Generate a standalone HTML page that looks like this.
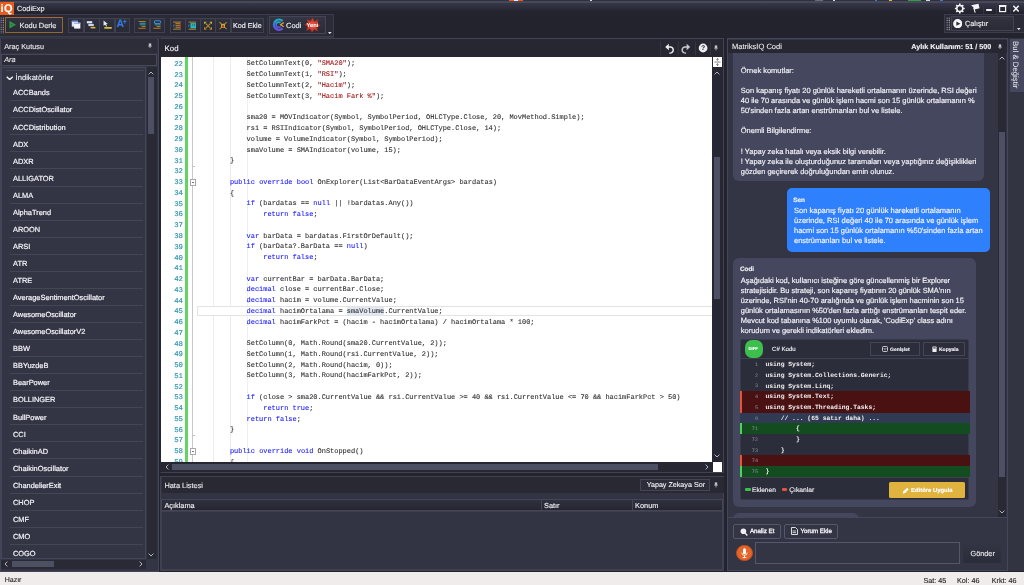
<!DOCTYPE html>
<html lang="tr"><head><meta charset="utf-8"><title>CodiExp</title><style>
*{margin:0;padding:0;box-sizing:border-box}
html,body{width:1024px;height:585px;overflow:hidden;background:#23232e}
body{text-rendering:geometricPrecision;position:relative;font-family:"Liberation Sans",sans-serif;font-size:7.3px;color:#e9e9ee;line-height:1}
.a{position:absolute}
.t{-webkit-text-stroke:0.12px;position:absolute;white-space:nowrap;line-height:10px;height:10px}
.b{font-weight:bold}
.mono{font-family:"Liberation Mono",monospace}
.code{-webkit-text-stroke:0.1px;position:absolute;left:196.5px;white-space:pre;font-family:"Liberation Mono",monospace;font-size:6.965px;line-height:10.76px;height:10.76px;color:#303030}
.code .k{color:#1a1aff}
.code .s{color:#a31515}
.ln{-webkit-text-stroke:0.15px;position:absolute;left:161px;width:22px;text-align:right;font-family:"Liberation Mono",monospace;font-size:7.35px;line-height:10.76px;height:10.76px;color:#2b91af}
.it{-webkit-text-stroke:0.2px;position:absolute;left:13px;white-space:nowrap;line-height:10px;height:10px;font-size:7.42px;color:#f4f4f8}
.sep{position:absolute;left:10px;width:133px;height:1px;background:#444656}
.chat{-webkit-text-stroke:0.18px;position:absolute;white-space:nowrap;font-size:7.47px;line-height:10.1px;height:10.1px;color:#f0f0f4}
.dl{position:absolute;left:740px;width:229.5px;height:10.7px}
.dn{position:absolute;left:746px;width:12px;text-align:right;font-family:"Liberation Mono",monospace;font-size:5.2px;line-height:10.7px;color:#8a8c9c}
.dc{position:absolute;left:765.4px;white-space:pre;font-family:"Liberation Mono",monospace;font-weight:bold;font-size:6.37px;line-height:10.7px;color:#f2f2f2}
</style></head><body>
<div id="root" style="position:absolute;left:0;top:0;width:1024px;height:585px;will-change:transform">
<div class="a" style="left:0px;top:0px;width:1024px;height:38px;background:#23232e;"></div>
<div class="a" style="left:0px;top:0px;width:1024px;height:1px;background:#30313d;"></div>
<div class="a" style="left:0px;top:1px;width:1024px;height:1.5px;background:#474859;"></div>
<div class="a" style="left:0px;top:2.5px;width:1024px;height:9.5px;background:linear-gradient(#373848,#23232e);"></div>
<div class="a" style="left:0px;top:38px;width:1024px;height:534px;background:#23232e;"></div>
<div class="a" style="left:-1px;top:14px;width:335.2px;height:23.2px;background:#2a2b37;border:1px solid #3b3c4b;"></div>
<div class="a" style="left:0px;top:37.2px;width:334px;height:1.4px;background:#343545;"></div>
<div class="a" style="left:908px;top:0px;width:13px;height:1.2px;background:#2f9e44;"></div>
<div class="a" style="left:509px;top:0px;width:5px;height:1.2px;background:#e8591c;"></div>
<div class="a" style="left:514px;top:0px;width:4px;height:1.2px;background:#e8e8ee;"></div>
<div class="a" style="left:518px;top:0px;width:5px;height:1.2px;background:#e8591c;"></div>
<div class="a" style="left:590px;top:0px;width:2px;height:1.2px;background:#d8d8e0;"></div>
<div class="a" style="left:815px;top:0px;width:8px;height:1.2px;background:#6a6b78;"></div>
<div class="a" style="left:833px;top:0px;width:2px;height:1.2px;background:#d8d8e0;"></div>
<div class="a" style="left:875px;top:0px;width:2px;height:1.2px;background:#3a7bd5;"></div>
<div class="a" style="left:889px;top:0px;width:3px;height:1.2px;background:#e0b23e;"></div>
<div class="a" style="left:926px;top:0px;width:4px;height:1.2px;background:#d8d8e0;"></div>
<div class="a" style="left:940px;top:0px;width:3px;height:1.2px;background:#3a7bd5;"></div>
<div class="a" style="left:0;top:2px;width:14px;height:12.5px;background:#e8591c;overflow:hidden"><div class="t b" style="left:0.6px;top:1.6px;font-size:11px;color:#fff;letter-spacing:0.4px">iQ</div></div>
<div class="t " style="left:17px;top:4.10px;font-size:7.3px;color:#f0f0f4">CodiExp</div>
<svg class="a" style="left:950px;top:2px" width="74" height="13" viewBox="950 2 74 13">
<g fill="none" stroke="#f4f4f8" stroke-width="1.5">
<circle cx="959.8" cy="8.5" r="3"/>
<g stroke-width="1.6"><path d="M959.8 3.6v1.6M959.8 11.8v1.6M954.9 8.5h1.6M963.1 8.5h1.6M956.3 5l1.2 1.2M962.1 10.8l1.2 1.2M963.3 5l-1.2 1.2M957.5 10.8l-1.2 1.2"/></g>
</g>
<path d="M971 5.2 l7.5 -1.4 l1 4.4 l-5 1.3 l-1.2 -2.2 z" fill="#f4f4f8"/><path d="M973.6 7.6 l1.6 5" stroke="#f4f4f8" stroke-width="1.1"/>
<rect x="986.2" y="9" width="5.6" height="2" fill="#f4f4f8"/>
<rect x="999.6" y="5.6" width="6" height="6" fill="none" stroke="#f4f4f8" stroke-width="1.2"/><rect x="999" y="5" width="7.2" height="2" fill="#f4f4f8"/>
<path d="M1013.3 5.8 l5.4 5.6 M1018.7 5.8 l-5.4 5.6" stroke="#f4f4f8" stroke-width="1.5"/>
</svg>
<div class="a" style="left:983.3px;top:2.5px;width:0.8px;height:11px;background:#343544;"></div>
<div class="a" style="left:996.3px;top:2.5px;width:0.8px;height:11px;background:#343544;"></div>
<div class="a" style="left:1010px;top:2.5px;width:0.8px;height:11px;background:#343544;"></div>
<div class="a" style="left:0;top:17px;width:4px;height:17px;background-image:radial-gradient(circle,#a4a5b2 0.55px,rgba(0,0,0,0) 0.85px);background-size:2.3px 2.3px;"></div>
<div class="a" style="left:4.9px;top:17.3px;width:58.4px;height:15.6px;background:linear-gradient(#32333f,#2a2b36);border:1px solid #8f6c2e;border-top-color:#a8663a;"></div>
<svg class="a" style="left:8.8px;top:20.3px" width="7.6" height="9.5" viewBox="0 0 9 10"><path d="M0.5 0.5 L8.5 5 L0.5 9.5 z" fill="#2c9a46"/><path d="M2.4 3.6 L5 5 L2.4 6.4z" fill="#1f7a36"/></svg>
<div class="t " style="left:19.5px;top:21.20px;font-size:7.4px;color:#f2f2f6">Kodu Derle</div>
<div class="a" style="left:68.3px;top:17.6px;width:15.9px;height:15.3px;background:linear-gradient(#30313f,#292a36);border:1px solid #3f4050;"></div>
<div class="a" style="left:83.7px;top:17.6px;width:15.9px;height:15.3px;background:linear-gradient(#30313f,#292a36);border:1px solid #3f4050;"></div>
<div class="a" style="left:99.1px;top:17.6px;width:15.9px;height:15.3px;background:linear-gradient(#30313f,#292a36);border:1px solid #3f4050;"></div>
<div class="a" style="left:114.5px;top:17.6px;width:15.9px;height:15.3px;background:linear-gradient(#30313f,#292a36);border:1px solid #3f4050;"></div>
<div class="a" style="left:134.2px;top:17.6px;width:15.8px;height:15.3px;background:linear-gradient(#30313f,#292a36);border:1px solid #3f4050;"></div>
<div class="a" style="left:149.5px;top:17.6px;width:15.8px;height:15.3px;background:linear-gradient(#30313f,#292a36);border:1px solid #3f4050;"></div>
<div class="a" style="left:170.0px;top:17.6px;width:15.65px;height:15.3px;background:linear-gradient(#30313f,#292a36);border:1px solid #3f4050;"></div>
<div class="a" style="left:185.15px;top:17.6px;width:15.65px;height:15.3px;background:linear-gradient(#30313f,#292a36);border:1px solid #3f4050;"></div>
<div class="a" style="left:200.3px;top:17.6px;width:15.65px;height:15.3px;background:linear-gradient(#30313f,#292a36);border:1px solid #3f4050;"></div>
<div class="a" style="left:215.45px;top:17.6px;width:15.65px;height:15.3px;background:linear-gradient(#30313f,#292a36);border:1px solid #3f4050;"></div>
<div class="a" style="left:230.6px;top:17.6px;width:33.6px;height:15.3px;background:linear-gradient(#30313f,#292a36);border:1px solid #3f4050;"></div>
<div class="t " style="left:233.1px;top:21.20px;font-size:7.15px;color:#f6f6fa">Kod Ekle</div>
<svg class="a" style="left:71.23px;top:20.02px" width="10.14" height="9.36" viewBox="0 0 13 12"><rect x="1" y="1" width="8" height="7.5" fill="#dfe6f5"/><rect x="1" y="1" width="8" height="1.6" fill="#6d8fe0"/><rect x="4" y="3.5" width="8" height="7.5" fill="#f4f6fb"/><rect x="4" y="3.5" width="8" height="1.6" fill="#9cb1ea"/></svg>
<svg class="a" style="left:86.13px;top:20.02px" width="10.14" height="9.36" viewBox="0 0 13 12"><rect x="1" y="1.5" width="7" height="2.8" fill="#dfe6f5"/><rect x="3" y="5" width="7" height="2.8" fill="#c9d3ea"/><rect x="6" y="8.8" width="6" height="2" fill="#e2b93a"/></svg>
<svg class="a" style="left:101.63px;top:20.02px" width="10.14" height="9.36" viewBox="0 0 13 12"><path d="M2 0.5 L2 7.5 L4 6 L5.6 8.6 L6.6 8 L5.2 5.6 L7.4 5.2z" fill="#e6e9f2"/><rect x="3" y="9" width="9.5" height="2.2" fill="#d8c23a"/><rect x="5" y="8" width="1.4" height="1.2" fill="#3cb34a"/></svg>
<div class="t b" style="left:116.6px;top:19.4px;font-size:10.4px;line-height:12px;height:12px;color:#2f7de6;letter-spacing:-0.5px">A<span style="font-size:7px;position:relative;top:-3.4px;left:-0.8px">+</span></div>
<svg class="a" style="left:136.73px;top:20.12px" width="10.14" height="9.36" viewBox="0 0 13 12"><rect x="2" y="1.4" width="9" height="1.1" fill="#c58a2c"/><rect x="3.5" y="3.6" width="7.5" height="1.2" fill="#3aa0a8"/><rect x="3.5" y="5.6" width="7.5" height="1.2" fill="#3aa0a8"/><rect x="6" y="7.8" width="5" height="1.1" fill="#c58a2c"/><rect x="2" y="10" width="9" height="1.1" fill="#c58a2c"/><rect x="1.4" y="9.9" width="1" height="1.2" fill="#c8322a"/></svg>
<svg class="a" style="left:152.03px;top:20.12px" width="10.14" height="9.36" viewBox="0 0 13 12"><rect x="3" y="1" width="8" height="3.4" rx="1.6" fill="none" stroke="#3a8fd0" stroke-width="1.3"/><rect x="3.5" y="5.6" width="7.5" height="1.2" fill="#3aa0a8"/><rect x="6" y="7.8" width="5" height="1.1" fill="#c58a2c"/><rect x="2" y="10" width="9" height="1.1" fill="#c58a2c"/><rect x="1.4" y="9.9" width="1" height="1.2" fill="#c8322a"/></svg>
<svg class="a" style="left:172.03px;top:20.52px" width="10.14" height="9.36" viewBox="0 0 13 12"><path d="M3 4.4 a2 2 0 0 0 0 3.4" fill="none" stroke="#2f8fd0" stroke-width="1.1"/><rect x="1.5" y="0.8" width="10" height="1.2" fill="#c58a2c"/><rect x="4.5" y="3" width="6" height="1.1" fill="#d9a23a"/><rect x="4.5" y="5.2" width="6" height="1.1" fill="#c58a2c"/><rect x="4.5" y="7.4" width="6" height="1.1" fill="#d9a23a"/><rect x="1.5" y="9.8" width="10" height="1.2" fill="#c58a2c"/><rect x="10.5" y="3" width="1" height="5.5" fill="#c8322a"/></svg>
<svg class="a" style="left:187.33px;top:20.52px" width="10.14" height="9.36" viewBox="0 0 13 12"><path d="M3 4.4 a2 2 0 0 0 0 3.4" fill="none" stroke="#2f8fd0" stroke-width="1.1"/><rect x="4.4" y="2.6" width="7.2" height="6.8" fill="#2fb5b8"/><rect x="2" y="0.8" width="9.6" height="1.2" fill="#c58a2c"/><rect x="2" y="9.9" width="9.6" height="1.2" fill="#c58a2c"/><rect x="7" y="3.6" width="1" height="3" fill="#1c6a90"/><rect x="9" y="3.6" width="1" height="3" fill="#1c6a90"/></svg>
<svg class="a" style="left:202.63px;top:20.52px" width="10.14" height="9.36" viewBox="0 0 13 12"><path d="M3.4 3 L9.6 9.4 M9.6 3 L3.4 9.4" stroke="#a8842c" stroke-width="1.5"/><path d="M1.5 1 h3.2 l-3.2 3.2z M11.5 1 h-3.2 l3.2 3.2z M1.5 11 h3.2 l-3.2 -3.2z M11.5 11 h-3.2 l3.2 -3.2z" fill="#e3c02e"/><circle cx="3" cy="9.4" r="0.9" fill="#c8322a"/><circle cx="10" cy="9.4" r="0.9" fill="#c8322a"/></svg>
<svg class="a" style="left:218.03px;top:20.52px" width="10.14" height="9.36" viewBox="0 0 13 12"><path d="M1.8 1.4 L11.2 10.6 M11.2 1.4 L1.8 10.6" stroke="#b8862c" stroke-width="1.3"/><path d="M4 3.6 h5 v5 h-5z" fill="#d9b52e"/><circle cx="6.5" cy="6.6" r="1.5" fill="#c8322a"/><circle cx="5.2" cy="4.8" r="0.8" fill="#7ab83a"/><circle cx="7.8" cy="4.8" r="0.8" fill="#7ab83a"/></svg>
<div class="a" style="left:266.8px;top:15px;width:0.8px;height:21.4px;background:#343545;"></div>
<div class="a" style="left:269px;top:15.7px;width:57px;height:18.7px;background:linear-gradient(#343545,#2a2b37);border:1px solid #444555;"></div>
<svg class="a" style="left:272px;top:18px" width="13" height="13.4" viewBox="0 0 13 13.4"><defs><linearGradient id="cg" x1="0" y1="0" x2="0" y2="1"><stop offset="0" stop-color="#1fb0c0"/><stop offset="0.5" stop-color="#3a72e4"/><stop offset="1" stop-color="#6a4ee2"/></linearGradient></defs><path d="M10.6 3 A5.1 5.1 0 1 0 10.6 10.4" fill="none" stroke="url(#cg)" stroke-width="2.4"/><path d="M8.6 4.9 A2.6 2.6 0 1 0 8.6 8.5" fill="none" stroke="url(#cg)" stroke-width="1.7"/><path d="M11.8 4.6 L8.6 6.7 L11.8 8.8" fill="none" stroke="#e9a23a" stroke-width="1.2"/></svg>
<div class="t " style="left:286px;top:21.00px;font-size:7.5px;color:#f2f2f6">Codi</div>
<svg class="a" style="left:303.6px;top:17.2px" width="17" height="16" viewBox="-8.5 -8 17 16"><path d="M0 -7.4 L1.9 -3.6 L5.8 -5.4 L4.5 -1.5 L7.9 0.5 L4.4 2.3 L5.3 6.3 L1.7 4.4 L-0.5 7.4 L-2.3 4 L-6.1 5.5 L-4.8 1.7 L-7.9 -0.4 L-4.6 -2.1 L-5.5 -5.9 L-1.9 -4 Z" fill="#cf3b2c" stroke="#8a2a20" stroke-width="0.5"/><circle cx="0" cy="0" r="3.6" fill="#e25a48" opacity="0.7"/><text x="0" y="2.1" font-family="Liberation Sans" font-weight="bold" font-size="5.8" fill="#fff" text-anchor="middle">Yeni</text></svg>
<svg class="a" style="left:328.1px;top:31.9px" width="3.6" height="2.2" viewBox="0 0 5 3"><path d="M0 0h5L2.5 3z" fill="#e6e6ec"/></svg>
<div class="a" style="left:943.5px;top:14px;width:81.5px;height:19px;background:#2a2b37;border:1px solid #3b3c4b;border-right:none;"></div>
<div class="a" style="left:945.5px;top:17px;width:4px;height:14px;background-image:radial-gradient(circle,#a4a5b2 0.55px,rgba(0,0,0,0) 0.85px);background-size:2.3px 2.3px;"></div>
<div class="a" style="left:951px;top:16px;width:62.5px;height:14.6px;background:linear-gradient(#32333f,#292a36);border:1px solid #414252;"></div>
<svg class="a" style="left:952.8px;top:18.6px" width="9.4" height="9.4" viewBox="0 0 10 10"><circle cx="5" cy="5" r="4.9" fill="#f6f6fa"/><path d="M3.6 2.7 L7.9 5 L3.6 7.3z" fill="#2a2b37"/></svg>
<div class="t " style="left:965px;top:19.20px;font-size:7.3px;color:#f2f2f6">Çalıştır</div>
<svg class="a" style="left:1017.2px;top:28.2px" width="3.6" height="2.2" viewBox="0 0 5 3"><path d="M0 0h5L2.5 3z" fill="#e6e6ec"/></svg>
<div class="a" style="left:0px;top:38.5px;width:158.6px;height:533px;background:#333544;border:1px solid #42445a;"></div>
<div class="a" style="left:1px;top:39px;width:156px;height:13.5px;background:#2c2d39;"></div>
<div class="t " style="left:4.2px;top:41.50px;font-size:7.3px;color:#e6e6ec">Araç Kutusu</div>
<svg class="a" style="left:148.4px;top:42.6px" width="4" height="5.6" viewBox="0 0 5 7"><rect x="1" y="0.5" width="3" height="3.2" fill="#c4c4ce"/><rect x="0.3" y="3.5" width="4.4" height="1" fill="#c4c4ce"/><rect x="2" y="4.4" width="1" height="2.4" fill="#c4c4ce"/></svg>
<div class="a" style="left:1px;top:53.5px;width:156px;height:12px;background:#2a2b37;border:1px solid #474858;"></div>
<div class="t " style="left:4.2px;top:54.60px;font-style:italic;font-size:7.3px;color:#e6e6ec">Ara</div>
<div class="a" style="left:1px;top:66.8px;width:144.5px;height:492.2px;background:#333544;border:1px solid #44465a;"></div>
<div class="a" style="left:5.5px;top:69.5px;width:138px;height:1px;background:#444656;"></div>
<svg class="a" style="left:5.5px;top:75.5px" width="7.5" height="4.6" viewBox="0 0 7.5 4.6"><path d="M0.7 0.8 L3.75 3.6 L6.8 0.8" fill="none" stroke="#f0f0f4" stroke-width="1.4"/></svg>
<div class="t " style="left:15.6px;top:72.50px;font-size:7.6px;color:#f2f2f6">İndikatörler</div>
<div class="it" style="top:88.40px">ACCBands</div>
<div class="sep" style="top:100.20px"></div>
<div class="it" style="top:105.46px">ACCDistOscillator</div>
<div class="sep" style="top:117.26px"></div>
<div class="it" style="top:122.52px">ACCDistribution</div>
<div class="sep" style="top:134.32px"></div>
<div class="it" style="top:139.58px">ADX</div>
<div class="sep" style="top:151.38px"></div>
<div class="it" style="top:156.64px">ADXR</div>
<div class="sep" style="top:168.44px"></div>
<div class="it" style="top:173.70px">ALLIGATOR</div>
<div class="sep" style="top:185.50px"></div>
<div class="it" style="top:190.76px">ALMA</div>
<div class="sep" style="top:202.56px"></div>
<div class="it" style="top:207.82px">AlphaTrend</div>
<div class="sep" style="top:219.62px"></div>
<div class="it" style="top:224.88px">AROON</div>
<div class="sep" style="top:236.68px"></div>
<div class="it" style="top:241.94px">ARSI</div>
<div class="sep" style="top:253.74px"></div>
<div class="it" style="top:259.00px">ATR</div>
<div class="sep" style="top:270.80px"></div>
<div class="it" style="top:276.06px">ATRE</div>
<div class="sep" style="top:287.86px"></div>
<div class="it" style="top:293.12px">AverageSentimentOscillator</div>
<div class="sep" style="top:304.92px"></div>
<div class="it" style="top:310.18px">AwesomeOscillator</div>
<div class="sep" style="top:321.98px"></div>
<div class="it" style="top:327.24px">AwesomeOscillatorV2</div>
<div class="sep" style="top:339.04px"></div>
<div class="it" style="top:344.30px">BBW</div>
<div class="sep" style="top:356.10px"></div>
<div class="it" style="top:361.36px">BBYuzdeB</div>
<div class="sep" style="top:373.16px"></div>
<div class="it" style="top:378.42px">BearPower</div>
<div class="sep" style="top:390.22px"></div>
<div class="it" style="top:395.48px">BOLLINGER</div>
<div class="sep" style="top:407.28px"></div>
<div class="it" style="top:412.54px">BullPower</div>
<div class="sep" style="top:424.34px"></div>
<div class="it" style="top:429.60px">CCI</div>
<div class="sep" style="top:441.40px"></div>
<div class="it" style="top:446.66px">ChaikinAD</div>
<div class="sep" style="top:458.46px"></div>
<div class="it" style="top:463.72px">ChaikinOscillator</div>
<div class="sep" style="top:475.52px"></div>
<div class="it" style="top:480.78px">ChandelierExit</div>
<div class="sep" style="top:492.58px"></div>
<div class="it" style="top:497.84px">CHOP</div>
<div class="sep" style="top:509.64px"></div>
<div class="it" style="top:514.90px">CMF</div>
<div class="sep" style="top:526.70px"></div>
<div class="it" style="top:531.96px">CMO</div>
<div class="sep" style="top:543.76px"></div>
<div class="it" style="top:549.02px">COGO</div>
<div class="a" style="left:146.5px;top:66.8px;width:10px;height:492.2px;background:#292a36;"></div>
<svg class="a" style="left:148.2px;top:71px" width="6" height="4" viewBox="0 0 6 4"><path d="M0.6 3.4 L3 1 L5.4 3.4" fill="none" stroke="#c4c4ce" stroke-width="0.9"/></svg>
<div class="a" style="left:148.2px;top:77.3px;width:5.7px;height:57.2px;background:#4d4f63;"></div>
<svg class="a" style="left:148.2px;top:552.5px" width="6" height="4" viewBox="0 0 6 4"><path d="M0.6 0.6 L3 3 L5.4 0.6" fill="none" stroke="#c4c4ce" stroke-width="0.9"/></svg>
<div class="a" style="left:1px;top:559.8px;width:144.5px;height:9px;background:#292a36;"></div>
<svg class="a" style="left:3.5px;top:561.3px" width="4" height="6" viewBox="0 0 4 6"><path d="M3.4 0.6 L1 3 L3.4 5.4" fill="none" stroke="#c4c4ce" stroke-width="0.9"/></svg>
<div class="a" style="left:12px;top:561.3px;width:42px;height:6px;background:#4d4f63;"></div>
<svg class="a" style="left:138.5px;top:561.3px" width="4" height="6" viewBox="0 0 4 6"><path d="M0.6 0.6 L3 3 L0.6 5.4" fill="none" stroke="#c4c4ce" stroke-width="0.9"/></svg>
<div class="a" style="left:160px;top:38.3px;width:564.2px;height:435px;background:#262730;border:1px solid #414251;border-left-color:#262730;"></div>
<div class="t " style="left:164.6px;top:44.10px;font-size:7.8px;color:#f4f4f8">Kod</div>
<svg class="a" style="left:655px;top:40px" width="62" height="16" viewBox="655 40 62 16">
<path d="M660.6 41.5v14M678.2 41.5v14M695.4 41.5v14M710.3 41.5v14" stroke="#363746" stroke-width="1"/>
<path d="M665.2 47 l3.6 -3.2 v6.4z" fill="#eeeef2"/><path d="M668 47 h2.4 a3 3 0 0 1 0.6 5.9 l-1.6 0.3" fill="none" stroke="#eeeef2" stroke-width="1.4"/>
<path d="M690.2 47 l-3.6 -3.2 v6.4z" fill="#c6c6d0"/><path d="M687.4 47 h-2.4 a3 3 0 0 0 -0.6 5.9 l1.6 0.3" fill="none" stroke="#c6c6d0" stroke-width="1.4"/>
<circle cx="703.1" cy="48" r="4.4" fill="#eeeef2"/><text x="703.1" y="50.4" font-family="Liberation Sans" font-weight="bold" font-size="6.8" fill="#262730" text-anchor="middle">?</text>
</svg>
<svg class="a" style="left:714.2px;top:45px" width="4" height="5.6" viewBox="0 0 5 7"><rect x="1" y="0.5" width="3" height="3.2" fill="#c4c4ce"/><rect x="0.3" y="3.5" width="4.4" height="1" fill="#c4c4ce"/><rect x="2" y="4.4" width="1" height="2.4" fill="#c4c4ce"/></svg>
<div class="a" style="left:160.8px;top:57px;width:551.7px;height:405px;background:#fff;overflow:hidden">
<div class="a" style="left:-160.8px;top:-57px;width:1024px;height:585px">
<div class="a" style="left:185.3px;top:57px;width:2.7px;height:405px;background:#63d463;"></div>
<div class="a" style="left:192.3px;top:57px;width:0.8px;height:405px;background:#c8c8c8;"></div>
<div class="a" style="left:213.3px;top:57px;width:0.7px;height:405px;background:#ececec;"></div>
<div class="a" style="left:229.9px;top:57px;width:0.7px;height:405px;background:#ececec;"></div>
<div class="a" style="left:246.5px;top:57px;width:0.7px;height:405px;background:#f0f0f0;"></div>
<div class="a" style="left:196.6px;top:305.6px;width:516px;height:10px;background:#fff;border:1px solid #e3e3e3;"></div>
<div class="a" style="left:346.9px;top:306.8px;width:37.6px;height:8.2px;background:#e3e9f2;"></div>
<div class="ln" style="top:59.82px">22</div>
<div class="code" style="top:59.42px">            SetColumnText(0, <span class="s">"SMA20"</span>);</div>
<div class="ln" style="top:70.58px">23</div>
<div class="code" style="top:70.18px">            SetColumnText(1, <span class="s">"RSI"</span>);</div>
<div class="ln" style="top:81.34px">24</div>
<div class="code" style="top:80.94px">            SetColumnText(2, <span class="s">"Hacim"</span>);</div>
<div class="ln" style="top:92.10px">25</div>
<div class="code" style="top:91.70px">            SetColumnText(3, <span class="s">"Hacim Fark %"</span>);</div>
<div class="ln" style="top:102.86px">26</div>
<div class="ln" style="top:113.62px">27</div>
<div class="code" style="top:113.22px">            sma20 = MOVIndicator(Symbol, SymbolPeriod, OHLCType.Close, 20, MovMethod.Simple);</div>
<div class="ln" style="top:124.38px">28</div>
<div class="code" style="top:123.98px">            rsi = RSIIndicator(Symbol, SymbolPeriod, OHLCType.Close, 14);</div>
<div class="ln" style="top:135.14px">29</div>
<div class="code" style="top:134.74px">            volume = VolumeIndicator(Symbol, SymbolPeriod);</div>
<div class="ln" style="top:145.90px">30</div>
<div class="code" style="top:145.50px">            smaVolume = SMAIndicator(volume, 15);</div>
<div class="ln" style="top:156.66px">31</div>
<div class="code" style="top:156.26px">        }</div>
<div class="ln" style="top:167.42px">32</div>
<div class="ln" style="top:178.18px">33</div>
<div class="code" style="top:177.78px">        <span class="k">public</span> <span class="k">override</span> <span class="k">bool</span> OnExplorer(List&lt;BarDataEventArgs&gt; bardatas)</div>
<div class="ln" style="top:188.94px">34</div>
<div class="code" style="top:188.54px">        {</div>
<div class="ln" style="top:199.70px">35</div>
<div class="code" style="top:199.30px">            <span class="k">if</span> (bardatas == <span class="k">null</span> || !bardatas.Any())</div>
<div class="ln" style="top:210.46px">36</div>
<div class="code" style="top:210.06px">                <span class="k">return</span> <span class="k">false</span>;</div>
<div class="ln" style="top:221.22px">37</div>
<div class="ln" style="top:231.98px">38</div>
<div class="code" style="top:231.58px">            <span class="k">var</span> barData = bardatas.FirstOrDefault();</div>
<div class="ln" style="top:242.74px">39</div>
<div class="code" style="top:242.34px">            <span class="k">if</span> (barData?.BarData == <span class="k">null</span>)</div>
<div class="ln" style="top:253.50px">40</div>
<div class="code" style="top:253.10px">                <span class="k">return</span> <span class="k">false</span>;</div>
<div class="ln" style="top:264.26px">41</div>
<div class="ln" style="top:275.02px">42</div>
<div class="code" style="top:274.62px">            <span class="k">var</span> currentBar = barData.BarData;</div>
<div class="ln" style="top:285.78px">43</div>
<div class="code" style="top:285.38px">            <span class="k">decimal</span> close = currentBar.Close;</div>
<div class="ln" style="top:296.54px">44</div>
<div class="code" style="top:296.14px">            <span class="k">decimal</span> hacim = volume.CurrentValue;</div>
<div class="ln" style="top:307.30px">45</div>
<div class="code" style="top:306.90px">            <span class="k">decimal</span> hacimOrtalama = smaVolume.CurrentValue;</div>
<div class="ln" style="top:318.06px">46</div>
<div class="code" style="top:317.66px">            <span class="k">decimal</span> hacimFarkPct = (hacim - hacimOrtalama) / hacimOrtalama * 100;</div>
<div class="ln" style="top:328.82px">47</div>
<div class="ln" style="top:339.58px">48</div>
<div class="code" style="top:339.18px">            SetColumn(0, Math.Round(sma20.CurrentValue, 2));</div>
<div class="ln" style="top:350.34px">49</div>
<div class="code" style="top:349.94px">            SetColumn(1, Math.Round(rsi.CurrentValue, 2));</div>
<div class="ln" style="top:361.10px">50</div>
<div class="code" style="top:360.70px">            SetColumn(2, Math.Round(hacim, 0));</div>
<div class="ln" style="top:371.86px">51</div>
<div class="code" style="top:371.46px">            SetColumn(3, Math.Round(hacimFarkPct, 2));</div>
<div class="ln" style="top:382.62px">52</div>
<div class="ln" style="top:393.38px">53</div>
<div class="code" style="top:392.98px">            <span class="k">if</span> (close &gt; sma20.CurrentValue &amp;&amp; rsi.CurrentValue &gt;= 40 &amp;&amp; rsi.CurrentValue &lt;= 70 &amp;&amp; hacimFarkPct &gt; 50)</div>
<div class="ln" style="top:404.14px">54</div>
<div class="code" style="top:403.74px">                <span class="k">return</span> <span class="k">true</span>;</div>
<div class="ln" style="top:414.90px">55</div>
<div class="code" style="top:414.50px">            <span class="k">return</span> <span class="k">false</span>;</div>
<div class="ln" style="top:425.66px">56</div>
<div class="code" style="top:425.26px">        }</div>
<div class="ln" style="top:436.42px">57</div>
<div class="ln" style="top:447.18px">58</div>
<div class="code" style="top:446.78px">        <span class="k">public</span> <span class="k">override</span> <span class="k">void</span> OnStopped()</div>
<div class="ln" style="top:457.94px">59</div>
<div class="code" style="top:457.54px">        {</div>
<div class="a" style="left:189.6px;top:179.16px;width:6.4px;height:6.4px;background:#fff;border:0.8px solid #a8a8a8"><div class="a" style="left:1px;top:2px;width:2.8px;height:0.8px;background:#777"></div></div>
<div class="a" style="left:189.6px;top:448.16px;width:6.4px;height:6.4px;background:#fff;border:0.8px solid #a8a8a8"><div class="a" style="left:1px;top:2px;width:2.8px;height:0.8px;background:#777"></div></div>
<div class="a" style="left:192.3px;top:165.64000000000001px;width:3px;height:0.8px;background:#c0c0c0;"></div>
<div class="a" style="left:192.3px;top:434.64px;width:3px;height:0.8px;background:#c0c0c0;"></div>
</div></div>
<div class="a" style="left:712.3px;top:57px;width:9.9px;height:405px;background:#262733;"></div>
<div class="a" style="left:712.5px;top:57px;width:9.5px;height:10px;background:#fff;"></div>
<svg class="a" style="left:714px;top:58px" width="7" height="8" viewBox="0 0 7 8"><path d="M0.5 4h6M3.5 0.5v2.2M3.5 5.3v2.2M2.3 1.7L3.5 0.5L4.7 1.7M2.3 6.3L3.5 7.5L4.7 6.3" stroke="#555" stroke-width="0.7" fill="none"/></svg>
<svg class="a" style="left:714.3px;top:71.3px" width="6" height="4" viewBox="0 0 6 4"><path d="M0.6 3.4 L3 1 L5.4 3.4" fill="none" stroke="#c4c4ce" stroke-width="0.9"/></svg>
<div class="a" style="left:714.4px;top:157px;width:5.8px;height:142.2px;background:#4d4f63;"></div>
<svg class="a" style="left:714.3px;top:453.5px" width="6" height="4" viewBox="0 0 6 4"><path d="M0.6 0.6 L3 3 L5.4 0.6" fill="none" stroke="#c4c4ce" stroke-width="0.9"/></svg>
<div class="a" style="left:160.8px;top:462px;width:551.7px;height:10px;background:#262733;"></div>
<div class="a" style="left:712.5px;top:462px;width:9.5px;height:10px;background:#fff;"></div>
<svg class="a" style="left:164.6px;top:464px" width="4" height="6" viewBox="0 0 4 6"><path d="M3.4 0.6 L1 3 L3.4 5.4" fill="none" stroke="#c4c4ce" stroke-width="0.9"/></svg>
<div class="a" style="left:171.7px;top:464.2px;width:486px;height:5.8px;background:#4d4f63;"></div>
<svg class="a" style="left:705px;top:464px" width="4" height="6" viewBox="0 0 4 6"><path d="M0.6 0.6 L3 3 L0.6 5.4" fill="none" stroke="#c4c4ce" stroke-width="0.9"/></svg>
<div class="a" style="left:160px;top:476.2px;width:564.2px;height:95.3px;background:#323443;border:1px solid #414251;"></div>
<div class="a" style="left:161.5px;top:477px;width:562px;height:15.5px;background:#282933;"></div>
<div class="t " style="left:164.4px;top:480.50px;font-size:7.4px;color:#e6e6ec">Hata Listesi</div>
<div class="a" style="left:640.4px;top:478.8px;width:70px;height:12px;background:#2c2d39;border:1px solid #444656;"></div>
<div class="t " style="left:646.7px;top:480.00px;font-size:7.16px;color:#f2f2f6">Yapay Zekaya Sor</div>
<svg class="a" style="left:714.2px;top:482.2px" width="4" height="5.6" viewBox="0 0 5 7"><rect x="1" y="0.5" width="3" height="3.2" fill="#c4c4ce"/><rect x="0.3" y="3.5" width="4.4" height="1" fill="#c4c4ce"/><rect x="2" y="4.4" width="1" height="2.4" fill="#c4c4ce"/></svg>
<div class="a" style="left:161.3px;top:499.4px;width:561.6px;height:11.6px;background:linear-gradient(#30313e,#252630);border:1px solid #444656;"></div>
<div class="a" style="left:161.3px;top:510.5px;width:561.6px;height:59.5px;border:1px solid #3e4052;"></div>
<div class="a" style="left:540.9px;top:499.4px;width:1px;height:11.6px;background:#444656;"></div>
<div class="a" style="left:631.6px;top:499.4px;width:1px;height:11.6px;background:#444656;"></div>
<div class="t " style="left:164.4px;top:501.30px;font-size:7.35px;color:#f2f2f6">Açıklama</div>
<div class="t " style="left:544px;top:501.30px;font-size:7.35px;color:#f2f2f6">Satır</div>
<div class="t " style="left:635.1px;top:501.30px;font-size:7.35px;color:#f2f2f6">Konum</div>
<div class="a" style="left:726.5px;top:38.3px;width:281px;height:533px;background:#333544;border:1px solid #44465a;"></div>
<div class="a" style="left:727.5px;top:39.5px;width:279px;height:13px;background:#262730;"></div>
<div class="t " style="left:732px;top:41.80px;font-size:7.56px;color:#e6e6ec">MatriksIQ Codi</div>
<div class="t b" style="left:911.25px;top:41.80px;font-size:7.22px;color:#f2f2f6">Aylık Kullanım: 51 / 500</div>
<svg class="a" style="left:998.2px;top:43.6px" width="4" height="5.6" viewBox="0 0 5 7"><rect x="1" y="0.5" width="3" height="3.2" fill="#c4c4ce"/><rect x="0.3" y="3.5" width="4.4" height="1" fill="#c4c4ce"/><rect x="2" y="4.4" width="1" height="2.4" fill="#c4c4ce"/></svg>
<div class="a" style="left:727.5px;top:52.5px;width:270.3px;height:464.3px;background:#333544;overflow:hidden"><div class="a" style="left:-727.5px;top:-52.5px;width:1024px;height:585px">
<div class="a" style="left:733.4px;top:40px;width:251px;height:141px;background:#45475e;border-radius:6px;"></div>
<div class="chat" style="left:740.8px;top:65.85px">Örnek komutlar:</div>
<div class="chat" style="left:740.8px;top:86.05px">Son kapanış fiyatı 20 günlük hareketli ortalamanın üzerinde, RSI değeri</div>
<div class="chat" style="left:740.8px;top:96.15px">40 ile 70 arasında ve günlük işlem hacmi son 15 günlük ortalamanın %</div>
<div class="chat" style="left:740.8px;top:106.25px">50'sinden fazla artan enstrümanları bul ve listele.</div>
<div class="chat" style="left:740.8px;top:126.45px">Önemli Bilgilendirme:</div>
<div class="chat" style="left:740.8px;top:146.85px">! Yapay zeka hatalı veya eksik bilgi verebilir.</div>
<div class="chat" style="left:740.8px;top:156.95px">! Yapay zeka ile oluşturduğunuz taramaları veya yaptığınız değişiklikleri</div>
<div class="chat" style="left:740.8px;top:167.05px">gözden geçirerek doğruluğundan emin olunuz.</div>
<div class="a" style="left:786.8px;top:188.3px;width:203.5px;height:63.6px;background:#2f80fd;border-radius:5px;"></div>
<div class="chat b" style="left:793.3px;top:195.50px;font-size:6.4px">Sen</div>
<div class="chat" style="left:794px;top:206.15px;font-size:7.52px">Son kapanış fiyatı 20 günlük hareketli ortalamanın</div>
<div class="chat" style="left:794px;top:216.25px;font-size:7.52px">üzerinde, RSI değeri 40 ile 70 arasında ve günlük işlem</div>
<div class="chat" style="left:794px;top:226.35px;font-size:7.52px">hacmi son 15 günlük ortalamanın %50'sinden fazla artan</div>
<div class="chat" style="left:794px;top:236.45px;font-size:7.52px">enstrümanları bul ve listele.</div>
<div class="a" style="left:733.4px;top:258px;width:242.6px;height:249px;background:#45475e;border-radius:6px;"></div>
<div class="chat b" style="left:739.9px;top:264.70px;font-size:6.4px">Codi</div>
<div class="chat" style="left:740.8px;top:275.95px">Aşağıdaki kod, kullanıcı isteğine göre güncellenmiş bir Explorer</div>
<div class="chat" style="left:740.8px;top:285.95px">stratejisidir. Bu strateji, son kapanış fiyatının 20 günlük SMA'nın</div>
<div class="chat" style="left:740.8px;top:296.05px">üzerinde, RSI'nin 40-70 aralığında ve günlük işlem hacminin son 15</div>
<div class="chat" style="left:740.8px;top:306.15px">günlük ortalamasının %50'den fazla arttığı enstrümanları tespit eder.</div>
<div class="chat" style="left:740.8px;top:316.25px">Mevcut kod tabanına %100 uyumlu olarak, 'CodiExp' class adını</div>
<div class="chat" style="left:740.8px;top:326.35px">korudum ve gerekli indikatörleri ekledim.</div>
<div class="a" style="left:740.2px;top:339px;width:229.3px;height:161px;background:#2c2d3a;border:1px solid #3a3b4a;border-radius:2px;overflow:hidden;"></div>
<div class="a" style="left:740.2px;top:358.2px;width:229.3px;height:0.8px;background:#3f4050;"></div>
<div class="a" style="left:745px;top:339.5px;width:18px;height:18.2px;background:#3cbf4c;border-radius:7px;"></div>
<div class="t b" style="left:748.4px;top:343.9px;font-size:4.3px;color:#fff">DIFF</div>
<div class="t " style="left:772px;top:345.00px;font-size:6.1px;color:#f0f0f4">C# Kodu</div>
<div class="a" style="left:870px;top:342px;width:50.4px;height:14.2px;background:#2c2d3a;border:1px solid #444656;"></div>
<div class="a" style="left:923.4px;top:342px;width:41.6px;height:14.2px;background:#2c2d3a;border:1px solid #444656;"></div>
<svg class="a" style="left:882px;top:345.8px" width="6" height="6" viewBox="0 0 6 6"><rect x="0.5" y="0.5" width="5" height="5" rx="1" fill="none" stroke="#f0f0f4" stroke-width="0.8"/><path d="M1.8 2.2 L3 3.6 L4.2 2.2" fill="none" stroke="#f0f0f4" stroke-width="0.8"/></svg>
<div class="t b" style="left:890px;top:344.90px;font-size:5px;color:#f0f0f4">Genişlet</div>
<svg class="a" style="left:932px;top:345.6px" width="5" height="6.4" viewBox="0 0 5 6.4"><rect x="0.4" y="0.4" width="4.2" height="5.6" rx="0.6" fill="#f0f0f4"/><rect x="1.2" y="1.4" width="2.6" height="1" fill="#2c2d3a"/></svg>
<div class="t b" style="left:939px;top:344.90px;font-size:5px;color:#f0f0f4">Kopyala</div>
<div class="dn" style="top:360.00px">1</div>
<div class="dc" style="top:360.10px">using System;</div>
<div class="dn" style="top:370.70px">2</div>
<div class="dc" style="top:370.80px">using System.Collections.Generic;</div>
<div class="dn" style="top:381.40px">3</div>
<div class="dc" style="top:381.50px">using System.Linq;</div>
<div class="dl" style="top:391.20px;background:#4a1113;border-left:2px solid #e2553c"></div>
<div class="dn" style="top:392.10px">4</div>
<div class="dc" style="top:392.20px">using System.Text;</div>
<div class="dl" style="top:401.90px;background:#4a1113;border-left:2px solid #e2553c"></div>
<div class="dn" style="top:402.80px">5</div>
<div class="dc" style="top:402.90px">using System.Threading.Tasks;</div>
<div class="dl" style="top:412.60px;background:#303a52"></div>
<div class="dn" style="top:413.50px">0</div>
<div class="dc" style="top:413.60px">    // ... (65 satır daha) ...</div>
<div class="dl" style="top:423.30px;background:#134d1f;border-left:2px solid #4fd35e"></div>
<div class="dn" style="top:424.20px">71</div>
<div class="dc" style="top:424.30px">        {</div>
<div class="dn" style="top:434.90px">72</div>
<div class="dc" style="top:435.00px">        }</div>
<div class="dn" style="top:445.60px">73</div>
<div class="dc" style="top:445.70px">    }</div>
<div class="dl" style="top:455.40px;background:#4a1113;border-left:2px solid #e2553c"></div>
<div class="dn" style="top:456.30px">74</div>
<div class="dl" style="top:466.10px;background:#134d1f;border-left:2px solid #4fd35e"></div>
<div class="dn" style="top:467.00px">75</div>
<div class="dc" style="top:467.10px">}</div>
<div class="a" style="left:740.2px;top:476.5px;width:229.3px;height:0.8px;background:#3f4050;"></div>
<div class="a" style="left:745px;top:488.1px;width:5.6px;height:2.9px;background:#3cbf4c;border-radius:1px;"></div>
<div class="t " style="left:752px;top:485.80px;font-size:6.6px;color:#f0f0f4">Eklenen</div>
<div class="a" style="left:781.6px;top:488.1px;width:5.6px;height:2.9px;background:#e2553c;border-radius:1px;"></div>
<div class="t " style="left:789.2px;top:485.80px;font-size:6.75px;color:#f0f0f4">Çıkanlar</div>
<div class="a" style="left:888.6px;top:481.8px;width:76.4px;height:16px;background:#e0b23e;border-radius:1.5px;"></div>
<svg class="a" style="left:901.5px;top:486.6px" width="7.5" height="7.5" viewBox="0 0 8 8"><path d="M0.8 7.2 L1.6 4.6 L5.6 0.8 L7.2 2.4 L3.4 6.4 Z" fill="#fff"/></svg>
<div class="t b" style="left:911px;top:485.70px;font-size:5.9px;color:#fff">Editöre Uygula</div>
<div class="a" style="left:733.4px;top:513.4px;width:126px;height:20px;background:#45475e;border-radius:6px;"></div>
</div></div>
<div class="a" style="left:997.8px;top:52.5px;width:8.7px;height:464.3px;background:#282935;"></div>
<svg class="a" style="left:999px;top:56px" width="6" height="4" viewBox="0 0 6 4"><path d="M0.6 3.4 L3 1 L5.4 3.4" fill="none" stroke="#c4c4ce" stroke-width="0.9"/></svg>
<div class="a" style="left:999.4px;top:132.4px;width:5.7px;height:344.5px;background:#4d4f63;"></div>
<svg class="a" style="left:999px;top:510px" width="6" height="4" viewBox="0 0 6 4"><path d="M0.6 0.6 L3 3 L5.4 0.6" fill="none" stroke="#c4c4ce" stroke-width="0.9"/></svg>
<div class="a" style="left:727.5px;top:516.8px;width:279px;height:1px;background:#44465a;"></div>
<div class="a" style="left:727.5px;top:517.8px;width:279px;height:52.6px;background:#333544;"></div>
<div class="a" style="left:733.4px;top:524px;width:47.6px;height:14.8px;background:#333544;border:1px solid #55576a;border-radius:2px;"></div>
<div class="a" style="left:784px;top:524px;width:54.4px;height:14.8px;background:#333544;border:1px solid #55576a;border-radius:2px;"></div>
<svg class="a" style="left:740px;top:527.5px" width="8" height="8" viewBox="0 0 8 8"><circle cx="3.4" cy="3.2" r="2.8" fill="#f0f0f4"/><path d="M5.2 5.2 L7.4 7.4" stroke="#f0f0f4" stroke-width="1.4"/></svg>
<div class="t " style="left:749.9px;top:527.00px;font-size:6.23px;color:#f4f4f8;-webkit-text-stroke:0.3px">Analiz Et</div>
<svg class="a" style="left:791px;top:527.4px" width="7" height="8" viewBox="0 0 7 8"><path d="M0.5 0.5 h4 l2 2 v5 h-6z" fill="none" stroke="#f0f0f4" stroke-width="0.9"/><path d="M1.6 4 h3.4 M1.6 5.6 h3.4" stroke="#f0f0f4" stroke-width="0.8"/></svg>
<div class="t " style="left:800.5px;top:527.00px;font-size:6.2px;color:#f4f4f8;-webkit-text-stroke:0.3px">Yorum Ekle</div>
<div class="a" style="left:736.4px;top:545px;width:16.2px;height:16.2px;border-radius:50%;background:#e4652a;border:0.6px solid #b8501e"></div>
<svg class="a" style="left:741px;top:547.8px" width="7" height="11" viewBox="0 0 7 11"><rect x="2" y="0.3" width="3" height="6" rx="1.5" fill="#fff"/><path d="M0.8 4.6 a2.7 2.7 0 0 0 5.4 0" fill="none" stroke="#fff" stroke-width="0.8"/><path d="M3.5 7.4 v2 M1.6 9.6 h3.8" stroke="#fff" stroke-width="0.9"/></svg>
<div class="a" style="left:755px;top:542.3px;width:205px;height:21.5px;background:#333544;border:1px solid #55576a;"></div>
<div class="a" style="left:963px;top:542.8px;width:37.6px;height:20.4px;background:linear-gradient(#333544,#2b2c39);"></div>
<div class="t " style="left:970.5px;top:548.60px;font-size:7.3px;color:#e9e9ee">Gönder</div>
<div class="a" style="left:1008px;top:38.3px;width:16px;height:533px;background:#323441;"></div>
<div class="a" style="left:1010px;top:38.5px;width:14px;height:53px;background:#45475e;"></div>
<div class="a" style="left:1008.2px;top:41.3px;width:14px;height:50px;writing-mode:vertical-rl;font-size:7.8px;line-height:14px;color:#f0f0f4;white-space:nowrap">Bul &amp; Değiştir</div>
<div class="a" style="left:0px;top:572px;width:1024px;height:13px;background:#f0eceb;"></div>
<div class="t " style="left:4.7px;top:576.30px;font-size:7.03px;color:#222">Hazır</div>
<div class="t " style="left:923.4px;top:575.70px;font-size:7.2px;color:#222">Sat: 45</div>
<div class="t " style="left:957px;top:575.70px;font-size:7.2px;color:#222">Kol: 46</div>
<div class="t " style="left:991.7px;top:575.70px;font-size:7.2px;color:#222">Krkt: 46</div>
</div>
</body></html>
